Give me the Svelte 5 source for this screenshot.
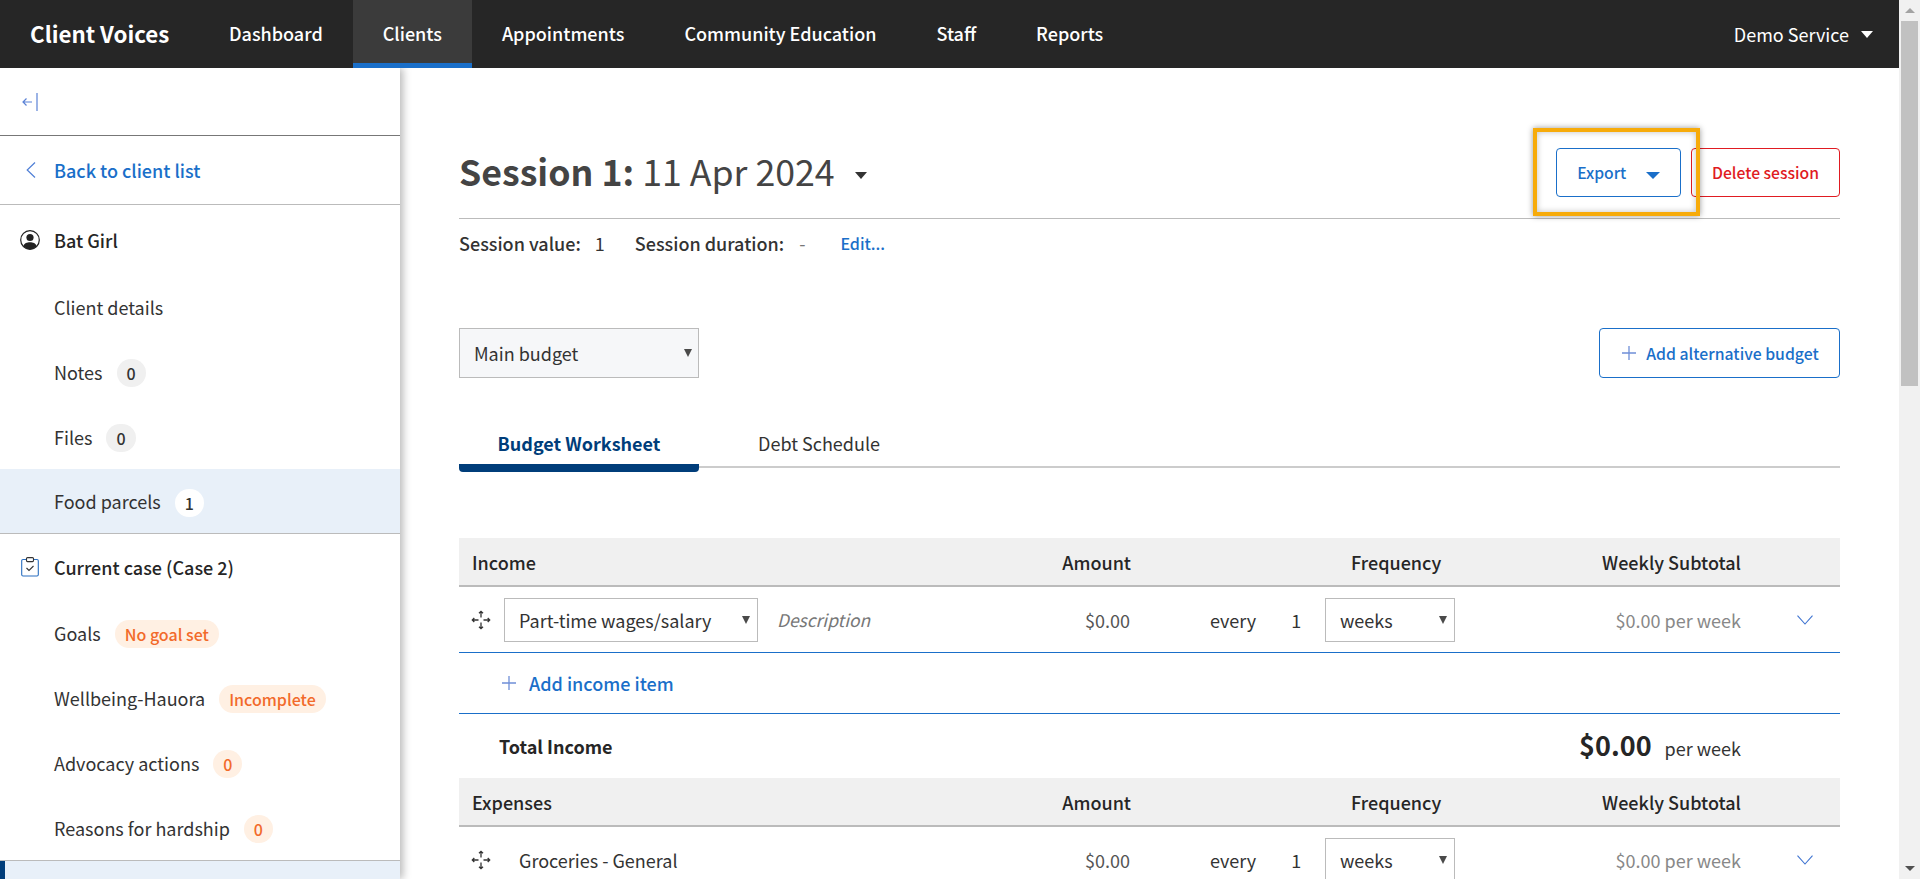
<script>
  const nav = ['Dashboard', 'Clients', 'Appointments', 'Community Education', 'Staff', 'Reports'];
  const clientItems = [
    { label: 'Client details' },
    { label: 'Notes', badge: '0' },
    { label: 'Files', badge: '0' },
    { label: 'Food parcels', badge: '1', active: true }
  ];
  const caseItems = [
    { label: 'Goals', badge: 'No goal set' },
    { label: 'Wellbeing-Hauora', badge: 'Incomplete' },
    { label: 'Advocacy actions', badge: '0' },
    { label: 'Reasons for hardship', badge: '0' }
  ];
</script>

{#snippet moveIcon()}
  <svg class="move" viewBox="0 0 20 20" width="20" height="20" fill="none" stroke="#333" stroke-width="1.300">
    <path d="M10 1.300v6.200M8 3.300 10 1.300l2 2M10 12.500v6.200M8 16.700l2 2 2-2M1.300 10h6.200M3.300 8 1.300 10l2 2M12.500 10h6.200M16.700 8l2 2-2 2"/>
  </svg>
{/snippet}

{#snippet plusIcon()}
  <svg class="plus" viewBox="0 0 14 14" width="14" height="14" fill="none" stroke="#6f8fd8" stroke-width="1.3">
    <path d="M7 0v14M0 7h14"/>
  </svg>
{/snippet}

{#snippet tableHead(title)}
  <div class="row head">
    <div class="head-title">{title}</div>
    <div class="right">Amount</div>
    <div></div>
    <div class="freq-label">Frequency</div>
    <div class="right">Weekly Subtotal</div>
    <div></div>
  </div>
{/snippet}

{#snippet itemRow(selectable, name)}
  <div class="row item">
    <div class="handle">{@render moveIcon()}</div>
    {#if selectable}
      <div class="select cell-select"><span>{name}</span><i class="tri"></i></div>
      <div class="desc">Description</div>
    {:else}
      <div class="plain-name">{name}</div>
      <div></div>
    {/if}
    <div class="right amount">$0.00</div>
    <div class="every"><span>every</span><span>1</span></div>
    <div class="select cell-select weeks"><span>weeks</span><i class="tri"></i></div>
    <div class="right muted">$0.00 per week</div>
    <div class="chev">
      <svg viewBox="0 0 16 10" width="16" height="10" fill="none" stroke="#3f74d1" stroke-width="1.1"><path d="M.5.7 8 9l7.5-8.3"/></svg>
    </div>
  </div>
{/snippet}

<div class="page">
  <div class="left">
    <header class="top">
      <div class="brand">Client Voices</div>
      <nav class="nav">
        {#each nav as n}
          <div class="nav-item" class:on={n === 'Clients'}>{n}</div>
        {/each}
      </nav>
      <div class="service">Demo Service <i class="caret white"></i></div>
    </header>

    <div class="body">
      <aside class="side">
        <div class="collapse">
          <svg viewBox="0 0 16 18" width="16" height="18" fill="none" stroke="#5b82d6" stroke-width="1.2">
            <path d="M15 0v18M1 9h9M4.500 5.500 1 9l3.500 3.500"/>
          </svg>
        </div>
        <div class="back">
          <svg viewBox="0 0 10 16" width="10" height="16" fill="none" stroke="#4f7fd6" stroke-width="1.2"><path d="M9 .5 1.200 8 9 15.500"/></svg>
          <span>Back to client list</span>
        </div>

        <div class="group-head first">
          <svg viewBox="0 0 20 20" width="20" height="20">
            <circle cx="10" cy="10" r="9.300" fill="none" stroke="#222" stroke-width="1.200"/>
            <circle cx="10" cy="7.500" r="3.600" fill="#222"/>
            <path d="M3.200 16.200C4.500 13 7 12.300 10 12.300s5.500.7 6.800 3.900A9.300 9.300 0 0 1 10 19.300a9.300 9.300 0 0 1-6.800-3.100Z" fill="#222"/>
          </svg>
          <span>Bat Girl</span>
        </div>
        {#each clientItems as it}
          <div class="side-item" class:active={it.active}>
            <span>{it.label}</span>
            {#if it.badge}<span class="badge" class:white-badge={it.active}>{it.badge}</span>{/if}
          </div>
        {/each}
        <div class="rule"></div>

        <div class="group-head second">
          <svg viewBox="0 0 18 20" width="18" height="20" fill="none" stroke="#2a6fc0" stroke-width="1.100">
            <path d="M5 2.500H2a1.300 1.300 0 0 0-1.300 1.300v14A1.300 1.300 0 0 0 2 19h14a1.300 1.300 0 0 0 1.300-1.200v-14A1.300 1.300 0 0 0 16 2.500h-3"/>
            <rect x="5.500" y=".6" width="7" height="4" rx="1" stroke="#333"/>
            <path d="m5.500 11 2.500 2.500 4.500-4.500" stroke="#333"/>
          </svg>
          <span>Current case (Case 2)</span>
        </div>
        {#each caseItems as it}
          <div class="side-item">
            <span>{it.label}</span>
            <span class="badge orange">{it.badge}</span>
          </div>
        {/each}
        <div class="rule"></div>
        <div class="side-current"></div>
      </aside>

      <main class="main">
        <div class="title-bar">
          <h1 class="title"><b>Session 1:</b> 11 Apr 2024 <i class="caret dark"></i></h1>
          <div class="actions">
            <button class="btn blue export">Export <i class="caret blue-caret"></i></button>
            <button class="btn red">Delete session</button>
          </div>
          <div class="highlight"></div>
        </div>

        <div class="meta">
          <b>Session value:</b><span class="val-one">1</span>
          <b class="dur">Session duration:</b><span class="val-dash">-</span>
          <a class="edit" href="#top">Edit...</a>
        </div>

        <div class="budget-bar">
          <div class="select main-select"><span>Main budget</span><i class="tri"></i></div>
          <button class="btn blue add-alt">{@render plusIcon()} Add alternative budget</button>
        </div>

        <div class="tabs">
          <div class="tab on">Budget Worksheet</div>
          <div class="tab">Debt Schedule</div>
        </div>

        {@render tableHead('Income')}
        {@render itemRow(true, 'Part-time wages/salary')}
        <div class="add-row">{@render plusIcon()}<span>Add income item</span></div>
        <div class="total-row">
          <b>Total Income</b>
          <div class="total"><strong>$0.00</strong><span>per week</span></div>
        </div>
        {@render tableHead('Expenses')}
        {@render itemRow(false, 'Groceries - General')}
      </main>
    </div>
  </div>

  <div class="scroll">
    <div class="s-btn"><i class="s-up"></i></div>
    <div class="s-thumb"></div>
    <div class="s-space"></div>
    <div class="s-btn"><i class="s-down"></i></div>
  </div>
</div>

<style>
  :global(body) {
    margin: 0;
    background: #fff;
    font-family: "Noto Sans CJK SC", "Noto Sans", sans-serif;
    font-size: 18px;
    line-height: 24px;
    color: #333;
  }
  .page {
    display: grid;
    grid-template-columns: 1899px 21px;
    height: 879px;
    overflow: hidden;
  }
  .left { display: flex; flex-direction: column; min-width: 0; height: 879px; }

  /* header */
  .top {
    height: 68px;
    flex: none;
    background: #262626;
    color: #fff;
    display: flex;
    align-items: stretch;
    padding-left: 30px;
    padding-right: 26px;
    position: relative;
    z-index: 3;
  }
  .brand { font-size: 22.300px; font-weight: 700; line-height: 66px; width: 170px; white-space: nowrap; }
  .nav { display: flex; margin-left: -1px; }
  .nav-item {
    padding: 0 30px;
    font-weight: 500;
    line-height: 67px;
    white-space: nowrap;
    box-sizing: border-box;
    height: 68px;
  }
  .nav-item.on { background: #3b3b3b; border-bottom: 5px solid #1a6fc9; }
  .service { margin-left: auto; line-height: 67px; display: flex; align-items: center; gap: 12px; white-space: nowrap; }

  .caret { display: inline-block; width: 0; height: 0; border-style: solid; border-color: transparent; }
  .caret.white { border-width: 7px 6px 0; border-top-color: #fff; }
  .caret.dark { border-width: 7px 6.500px 0; border-top-color: #333; margin-left: 12px; vertical-align: 7px; }
  .caret.blue-caret { border-width: 7px 7px 0; border-top-color: #1a6fc9; margin-left: 16px; vertical-align: 0; }

  .body { flex: 1; display: flex; min-height: 0; }

  /* sidebar */
  .side {
    width: 400px;
    flex: none;
    background: #fff;
    box-shadow: 3px 0 8px rgba(0, 0, 0, .28);
    position: relative;
    z-index: 2;
    overflow: hidden;
  }
  .collapse {
    height: 67px;
    border-bottom: 1px solid #777;
    display: flex;
    align-items: center;
    padding-left: 22px;
  }
  .back {
    height: 68px;
    border-bottom: 1px solid #bbb;
    display: flex;
    align-items: center;
    gap: 18px;
    padding-left: 26px;
    color: #1a6fc9;
    font-weight: 500;
  }
  .group-head {
    display: flex;
    align-items: center;
    font-weight: 500;
    color: #262626;
    padding-left: 20px;
  }
  .group-head.first { height: 69px; gap: 14px; }
  .group-head.second { height: 66px; gap: 15px; padding-left: 21px; }
  .side-item {
    height: 65px;
    display: flex;
    align-items: center;
    gap: 14px;
    padding-left: 54px;
  }
  .side-item.active { background: #e8f0f9; height: 64px; }
  .badge {
    min-width: 29px;
    height: 28px;
    padding: 0 10px;
    margin-top: 3px;
    box-sizing: border-box;
    border-radius: 14px;
    background: #f0f0f0;
    font-size: 16px;
    font-weight: 500;
    line-height: 28px;
    text-align: center;
  }
  .badge.white-badge { background: #fff; }
  .badge.orange { background: #fff0e3; color: #f26a2a; }
  .rule { height: 1px; background: #bbb; }
  .side-current {
    height: 40px;
    background: #e8f0f9;
    border-left: 5px solid #003d7a;
  }

  /* main */
  .main { flex: 1; min-width: 0; padding: 0 59px; }
  .title-bar {
    height: 151px;
    box-sizing: border-box;
    border-bottom: 1px solid #bbb;
    display: flex;
    align-items: flex-end;
    justify-content: space-between;
    padding-bottom: 22px;
    position: relative;
  }
  .title { margin: 0; font-size: 35.700px; line-height: 50px; font-weight: 400; color: #444; white-space: nowrap; }
  .title b { font-weight: 700; }
  .actions { display: flex; gap: 10px; margin-bottom: -1px; }
  .btn {
    font-family: inherit;
    font-weight: 500;
    background: #fff;
    border-radius: 4px;
    border: 1px solid;
    box-sizing: border-box;
    cursor: pointer;
  }
  .btn.blue { color: #1a6fc9; border-color: #1a6fc9; }
  .btn.red { color: #e01b22; border-color: #e01b22; width: 149px; height: 49px; font-size: 15.700px; }
  .btn.export { width: 125px; height: 49px; font-size: 15.700px; }
  .highlight {
    position: absolute;
    left: 1074px;
    top: 60px;
    width: 167px;
    height: 88px;
    box-sizing: border-box;
    border: 4px solid #f7ab0a;
    box-shadow: 0 0 6px rgba(0, 0, 0, .4), inset 0 0 6px rgba(0, 0, 0, .25);
    pointer-events: none;
  }

  .meta {
    height: 48px;
    display: flex;
    align-items: center;
    white-space: nowrap;
  }
  .meta b { font-weight: 500; color: #333; }
  .val-one { margin-left: 14px; }
  .dur { margin-left: 30px; }
  .val-dash { margin-left: 15px; color: #777; }
  .edit {
    margin-left: 35px;
    font-size: 16px;
    font-weight: 500;
    color: #1a6fc9;
    text-decoration: none;
  }

  .budget-bar {
    margin-top: 61px;
    display: flex;
    justify-content: space-between;
  }
  .select {
    border: 1px solid #bbb;
    box-sizing: border-box;
    display: flex;
    align-items: center;
    justify-content: space-between;
    padding: 0 7px 0 14px;
    background: #fff;
    color: #333;
    white-space: nowrap;
  }
  .main-select { width: 240px; height: 50px; background: #f6f7f9; padding-right: 6px; }
  .tri {
    width: 0;
    height: 0;
    border-style: solid;
    border-color: #4a4a4a transparent transparent;
    border-width: 8px 4.500px 0;
  }
  .add-alt {
    width: 241px;
    height: 50px;
    font-size: 15.800px;
    display: flex;
    align-items: center;
    justify-content: center;
    gap: 10px;
    padding: 0 0 0 2px;
  }

  .tabs {
    margin-top: 37px;
    height: 53px;
    display: flex;
    border-bottom: 2px solid #ccc;
    box-sizing: border-box;
    margin-bottom: 70px;
  }
  .tab {
    width: 240px;
    height: 57px;
    flex: none;
    box-sizing: border-box;
    text-align: center;
    line-height: 56px;
    color: #333;
  }
  .tab.on {
    font-weight: 700;
    color: #003d7a;
    border-bottom: 8px solid #003d7a;
    border-radius: 0 0 4px 4px;
  }

  .row {
    display: grid;
    grid-template-columns: 45px 254px 292px 81px 194px 130px 286px 99px;
    align-items: center;
  }
  .head {
    height: 49px;
    box-sizing: border-box;
    background: #f0f0f0;
    border-bottom: 2px solid #bbb;
    font-weight: 500;
    color: #262626;
  }
  .head-title { grid-column: 1 / span 3; padding-left: 13px; grid-row: 1; }
  .head > .right:nth-child(2) { grid-column: 4; }
  .right { text-align: right; white-space: nowrap; }
  .freq-label { padding-left: 26px; white-space: nowrap; }
  .item { height: 66px; box-sizing: border-box; border-bottom: 1px solid #1a6fc9; padding: 11px 0 10px; }
  .handle { padding-left: 12px; display: flex; }
  .cell-select { height: 44px; }
  .desc { padding-left: 19px; font-style: italic; color: #777; font-size: 17.400px; }
  .plain-name { padding-left: 15px; white-space: nowrap; }
  .amount { padding-right: 1px; color: #555; }
  .every { display: flex; gap: 35px; padding-left: 79px; }
  .muted { color: #888; }
  .chev { padding-left: 56px; display: flex; }
  .add-row {
    height: 61px;
    box-sizing: border-box;
    border-bottom: 1px solid #1a6fc9;
    display: flex;
    align-items: center;
    gap: 13px;
    padding-left: 43px;
    color: #1a6fc9;
    font-weight: 500;
  }
  .total-row {
    height: 64px;
    display: flex;
    align-items: center;
    justify-content: space-between;
    padding: 0 99px 0 40px;
    box-sizing: border-box;
  }
  .total-row b { font-weight: 700; color: #262626; }
  .total { display: flex; align-items: baseline; gap: 13px; }
  .total strong { font-size: 27px; font-weight: 700; color: #262626; }

  /* scrollbar */
  .scroll {
    background: #f1f1f1;
    display: flex;
    flex-direction: column;
    align-items: center;
    height: 879px;
  }
  .s-btn { height: 21px; width: 100%; display: flex; align-items: center; justify-content: center; flex: none; }
  .s-up { border-style: solid; border-color: transparent transparent #a3a3a3; border-width: 0 5px 5px; width: 0; height: 0; }
  .s-down { border-style: solid; border-color: #505050 transparent transparent; border-width: 5px 5px 0; width: 0; height: 0; }
  .s-thumb { width: 17px; height: 365px; background: #c1c1c1; flex: none; }
  .s-space { flex: 1; }
</style>
